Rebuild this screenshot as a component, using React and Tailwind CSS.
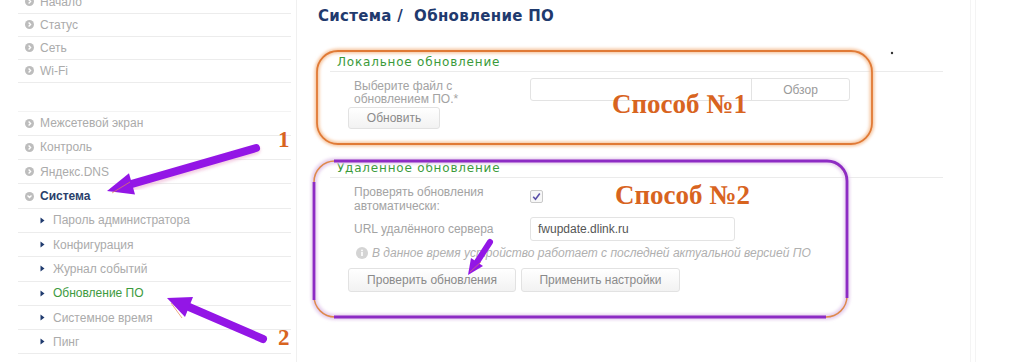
import React from "react";

// sidebar menu of the router web UI
const topItems = ["Начало", "Статус", "Сеть", "Wi-Fi"];
const midItems = ["Межсетевой экран", "Контроль", "Яндекс.DNS"];
const subItems = [
  "Пароль администратора",
  "Конфигурация",
  "Журнал событий",
  "Обновление ПО",
  "Системное время",
  "Пинг",
  "",
];

const RoundIcon = ({ down = false }) => (
  <svg width="9" height="9" viewBox="0 0 10 10" className="shrink-0">
    <circle cx="5" cy="5" r="5" fill="#bdbdbd" />
    {down ? (
      <path d="M2.8 4 L5 6.2 L7.2 4" stroke="#fff" strokeWidth="1.5" fill="none" />
    ) : (
      <path d="M4 2.8 L6.2 5 L4 7.2" stroke="#fff" strokeWidth="1.5" fill="none" />
    )}
  </svg>
);

const Tri = () => (
  <svg width="5" height="7" viewBox="0 0 5 7" className="shrink-0">
    <path d="M0.5 0.5 L4.5 3.5 L0.5 6.5 Z" fill="#1f3a6e" />
  </svg>
);

const Sidebar = () => (
  <div className="w-[297px] shrink-0 border-r border-[#f0f0f0] pl-[18px] pr-[5px] -mt-[9.5px]">
    {topItems.map((t) => (
      <div key={t} className="h-[23px] flex items-center gap-[6px] pl-[7px] border-b border-[#ececec] text-[12px] text-[#ababab]">
        <RoundIcon />
        <span>{t}</span>
      </div>
    ))}
    <div className="h-[29px] border-b border-[#f3f3f3]" />
    {midItems.map((t) => (
      <div key={t} className="h-[24.3px] flex items-center gap-[6px] pl-[7px] border-b border-[#ececec] text-[12px] text-[#ababab]">
        <RoundIcon />
        <span>{t}</span>
      </div>
    ))}
    <div className="h-[24.3px] flex items-center gap-[6px] pl-[7px] border-b border-[#ececec] text-[12px] font-bold text-[#2a3f6b]">
      <RoundIcon down />
      <span>Система</span>
    </div>
    {subItems.map((t, i) => (
      <div
        key={i}
        className={
          "h-[24.3px] flex items-center gap-[8px] pl-[22px] border-b border-[#ececec] text-[12px] " +
          (t === "Обновление ПО" ? "text-[#3d9a3d]" : "text-[#ababab]")
        }
      >
        <Tri />
        <span>{t}</span>
      </div>
    ))}
  </div>
);

const Btn = ({ children, w }) => (
  <div
    className={
      "h-full flex items-center justify-center rounded-[3px] border border-[#e2e2e2] bg-gradient-to-b from-white to-[#f2f2f2] text-[12px] text-[#8a8a8a] " +
      w
    }
  >
    {children}
  </div>
);

const Main = () => (
  <div className="flex-1 pl-[21px] pt-[6px]">
    <h1 className="h-[20px] leading-[20px] text-[15px] font-bold tracking-[0.3px] text-[#1f3a6e] font-['DejaVu_Sans',sans-serif]">
      Система / &nbsp;Обновление ПО
    </h1>

    {/* local update */}
    <div className="ml-[12px] w-[613px] mt-[28px]">
      <div className="h-[18px] border-b border-[#ebebeb] pl-[7px] text-[12px] leading-[17px] tracking-[0.8px] text-[#3a9a3a] font-['DejaVu_Sans',sans-serif]">
        Локальное обновление
      </div>
      <div className="flex mt-[6px] pl-[24px]">
        <div className="w-[176px] text-[12px] leading-[13px] text-[#a3a3a3] pt-[2px]">
          Выберите файл с<br />обновлением ПО.*
        </div>
        <div className="w-[320px] h-[23px] flex border border-[#e3e3e3] rounded-[3px]">
          <div className="flex-1" />
          <div className="w-[98px] border-l border-[#e3e3e3] flex items-center justify-center text-[12px] text-[#9a9a9a]">
            Обзор
          </div>
        </div>
      </div>
      <div className="h-[22px] mt-[1px] pl-[18px] flex">
        <Btn w="w-[92px]">Обновить</Btn>
      </div>
    </div>

    {/* remote update */}
    <div className="ml-[12px] w-[613px] mt-[31px]">
      <div className="h-[18px] border-b border-[#ebebeb] pl-[7px] text-[12px] leading-[17px] tracking-[0.8px] text-[#3a9a3a] font-['DejaVu_Sans',sans-serif]">
        Удаленное обновление
      </div>
      <div className="flex mt-[7px] pl-[24px]">
        <div className="w-[176px] text-[12px] leading-[14px] text-[#a3a3a3]">
          Проверять обновления<br />автоматически:
        </div>
        <div className="pt-[5px]">
          <svg width="13" height="13" viewBox="0 0 13 13">
            <rect x="0.5" y="0.5" width="12" height="12" rx="1.5" fill="#f7f7f7" stroke="#c9c9c9" />
            <path d="M3.2 6.8 L5.5 9.2 L9.8 3.6" stroke="#5a4fa8" strokeWidth="1.6" fill="none" />
          </svg>
        </div>
      </div>
      <div className="flex items-center mt-[4px] pl-[24px] h-[24px]">
        <div className="w-[176px] text-[12px] text-[#a3a3a3]">URL удалённого сервера</div>
        <div className="w-[205px] h-full flex items-center pl-[7px] border border-[#e3e3e3] rounded-[3px] text-[12px] text-[#555]">
          fwupdate.dlink.ru
        </div>
      </div>
      <div className="flex items-center gap-[4px] pl-[26px] h-[24px] mt-[0px]">
        <svg width="12" height="12" viewBox="0 0 12 12" className="shrink-0">
          <circle cx="6" cy="6" r="6" fill="#d4d4d4" />
          <rect x="5.2" y="5" width="1.6" height="4" fill="#fff" />
          <circle cx="6" cy="3.4" r="0.9" fill="#fff" />
        </svg>
        <span className="text-[12px] italic text-[#b0b0b0]">
          В данное время устройство работает с последней актуальной версией ПО
        </span>
      </div>
      <div className="flex gap-[5px] h-[24px] mt-[3px] pl-[18px]">
        <Btn w="w-[168px]">Проверить обновления</Btn>
        <Btn w="w-[159px]">Применить настройки</Btn>
      </div>
    </div>
  </div>
);

const Annotations = () => (
  <>
    <svg className="absolute inset-0 pointer-events-none" width="1024" height="362" viewBox="0 0 1024 362">
      <defs>
        <filter id="glow" x="-10%" y="-10%" width="120%" height="120%">
          <feGaussianBlur stdDeviation="1.5" />
        </filter>
      </defs>
      {/* orange frame 1 */}
      <rect x="317" y="51" width="555" height="93" rx="21" fill="none" stroke="#f6c7a3" strokeWidth="5" filter="url(#glow)" />
      <rect x="317" y="51" width="555" height="93" rx="21" fill="none" stroke="#e07a36" strokeWidth="1.8" />
      {/* frame 2 */}
      <rect x="314" y="161" width="533" height="156" rx="21" fill="none" stroke="#e6d0ee" strokeWidth="6" filter="url(#glow)" />
      <rect x="314" y="161" width="533" height="156" rx="21" fill="none" stroke="#de8a4e" strokeWidth="1.5" />
      <path d="M334 161 L827 161 A20 20 0 0 1 847 181 L847 298" fill="none" stroke="#8d2cc4" strokeWidth="2.8" />
      <path d="M314 182 L314 300" fill="none" stroke="#8d2cc4" strokeWidth="2.8" />
      <path d="M334 317 L826 317" fill="none" stroke="#8d2cc4" strokeWidth="2.8" />
      <circle cx="892" cy="53" r="1.2" fill="#333" />

      {/* arrow 1 */}
      <g>
        <path d="M256 150 L134 186" stroke="#e9a0c8" strokeWidth="9" strokeLinecap="round" opacity="0.5" filter="url(#glow)" />
        <path d="M256 148 L132 183.8" stroke="#9316e6" strokeWidth="8" strokeLinecap="round" />
        <polygon points="107,191 135,194.4 129,173.2" fill="#9316e6" />
        <path d="M112 193 L130 182" stroke="#e58a54" strokeWidth="1" opacity="0.7" />
      </g>
      {/* arrow 2 */}
      <g>
        <path d="M263 339 L189 307" stroke="#9316e6" strokeWidth="8" strokeLinecap="round" />
        <polygon points="167,298 193,297 185,317" fill="#9316e6" />
        <path d="M171 303 L182 318" stroke="#e58a54" strokeWidth="1" opacity="0.7" />
      </g>
      {/* arrow 3 */}
      <g>
        <path d="M490 242 L477 262" stroke="#9316e6" strokeWidth="6" strokeLinecap="round" />
        <polygon points="468,275 483,266 471,258" fill="#9316e6" />
        <path d="M470 272 L481 262" stroke="#e58a54" strokeWidth="1" opacity="0.6" />
      </g>
    </svg>
    <div className="absolute left-[612px] top-[88px] text-[27px] leading-[32px] font-bold text-[#d8641f] font-['Liberation_Serif',serif]">
      Способ №1
    </div>
    <div className="absolute left-[615px] top-[179px] text-[27px] leading-[32px] font-bold text-[#d8641f] font-['Liberation_Serif',serif]">
      Способ №2
    </div>
    <div className="absolute left-[278px] top-[126px] text-[23px] leading-[28px] font-bold text-[#d8641f] font-['Liberation_Serif',serif]">
      1
    </div>
    <div className="absolute left-[278px] top-[324px] text-[23px] leading-[28px] font-bold text-[#d8641f] font-['Liberation_Serif',serif]">
      2
    </div>
  </>
);

export default function App() {
  return (
    <div className="relative w-[1024px] h-[362px] overflow-hidden bg-white flex font-['Liberation_Sans',Arial,sans-serif]">
      <Sidebar />
      <Main />
      <div className="absolute left-[970px] top-0 w-[6px] h-full border-x border-[#f4f4f4] pointer-events-none" />
      <Annotations />
    </div>
  );
}
